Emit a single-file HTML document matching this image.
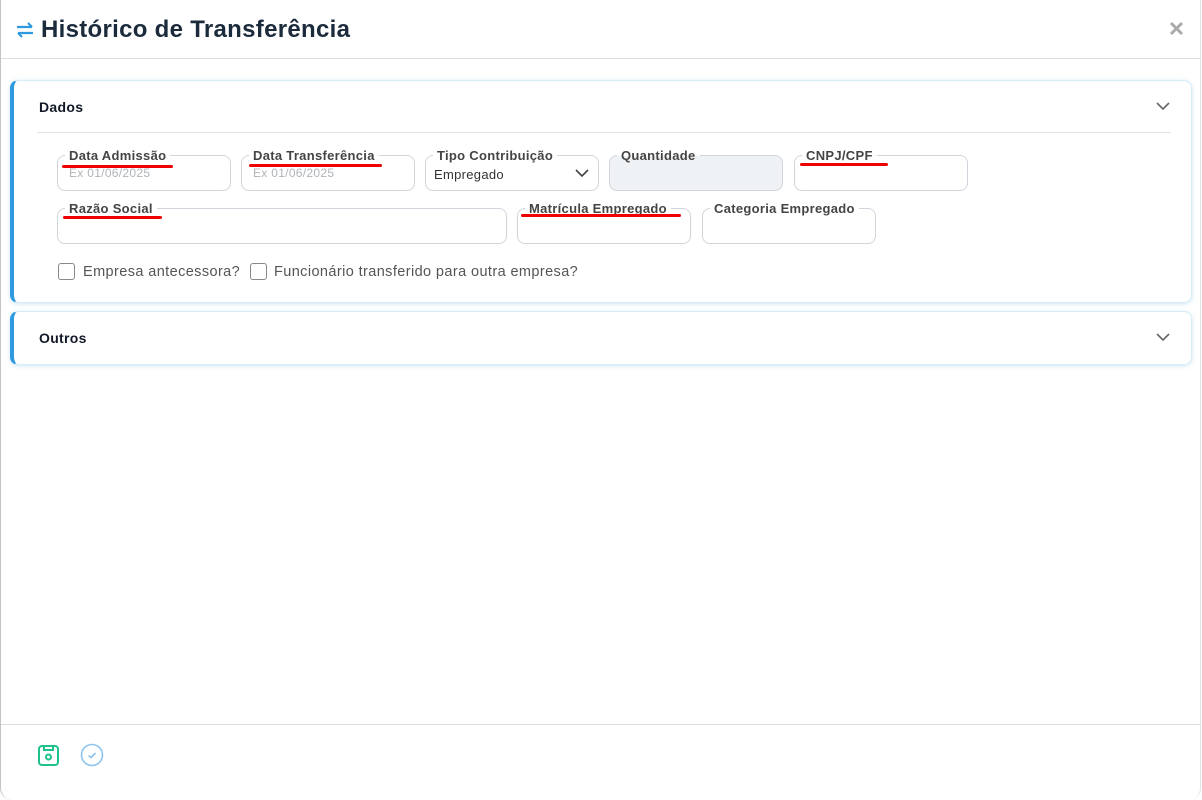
<!DOCTYPE html>
<html><head><meta charset="utf-8"><style>
*{box-sizing:border-box;margin:0;padding:0}
body{width:1202px;height:800px;background:#fff;font-family:"Liberation Sans",sans-serif;position:relative;overflow:hidden}
.a{position:absolute}
.modal{left:0;top:0;width:1201px;height:800px;border-left:1px solid #c4c4c4;border-right:1px solid #e4e4e4;border-radius:0 0 12px 12px}
.title{left:41px;top:16px;font-size:24px;font-weight:bold;color:#1c2b3c;letter-spacing:0.3px}
.card{left:10px;width:1182px;border:1px solid #d6ecf8;border-left:4px solid #2f9ae0;border-radius:8px;box-shadow:0 1px 4px rgba(120,180,220,.35)}
.ch{font-size:14px;font-weight:bold;color:#111827;letter-spacing:0.3px}
.f{border:1px solid #d1d5db;border-radius:8px;height:36px}
.lb{font-size:13px;font-weight:bold;color:#444;background:#fff;padding:0 4px;line-height:14px;top:-7px;left:7px;position:absolute;white-space:nowrap;letter-spacing:0.3px}
.ph{position:absolute;left:11px;top:10px;font-size:12px;color:#b0b4b8;letter-spacing:0.3px}
.red{position:absolute;height:3px;background:#e00;border-radius:2px}
.cb{width:17px;height:17px;border:1px solid #888;border-radius:3px}
.t{font-size:14.5px;color:#555;letter-spacing:0.4px}
</style></head><body>
<div class="a modal"></div>
<svg class="a" style="left:15px;top:22px" width="20" height="16" viewBox="0 0 20 16"><path d="M2 5h15M13 1l4 4M18 11H3M7 15l-4-4" stroke="#2f9ae0" stroke-width="2.2" fill="none"/></svg>
<div class="a title">Histórico de Transferência</div>
<svg class="a" style="left:1169px;top:21px" width="15" height="15" viewBox="0 0 15 15"><path d="M2 2l11 11M13 2L2 13" stroke="#aaa" stroke-width="3"/></svg>
<div class="a" style="left:1px;top:58px;width:1199px;height:1px;background:#ddd"></div>

<div class="a card" style="top:80px;height:223px"></div>
<div class="a ch" style="left:39px;top:99px">Dados</div>
<svg class="a" style="left:1156px;top:102px" width="14" height="9"><path d="M1 1l6 6 6-6" stroke="#666" stroke-width="1.6" fill="none"/></svg>
<div class="a" style="left:37px;top:132px;width:1134px;height:1px;background:#e2e2e2"></div>

<div class="a f" style="left:57px;top:155px;width:174px"><span class="lb">Data Admissão</span><span class="ph">Ex 01/06/2025</span></div>
<div class="red" style="left:62px;top:165px;width:111px"></div>
<div class="a f" style="left:241px;top:155px;width:174px"><span class="lb">Data Transferência</span><span class="ph">Ex 01/06/2025</span></div>
<div class="red" style="left:249px;top:164px;width:133px"></div>
<div class="a f" style="left:425px;top:155px;width:174px"><span class="lb">Tipo Contribuição</span><span class="ph" style="color:#333;font-size:13px;left:8px;top:11px">Empregado</span>
<svg style="position:absolute;left:149px;top:13px" width="14" height="9"><path d="M1 1l6 6 6-6" stroke="#444" stroke-width="1.6" fill="none"/></svg></div>
<div class="a f" style="left:609px;top:155px;width:174px;background:#eff2f5"><span class="lb" style="background:linear-gradient(#fff 50%,#eff2f5 50%)">Quantidade</span></div>
<div class="a f" style="left:794px;top:155px;width:174px"><span class="lb">CNPJ/CPF</span></div>
<div class="red" style="left:800px;top:163px;width:88px"></div>

<div class="a f" style="left:57px;top:208px;width:450px"><span class="lb">Razão Social</span></div>
<div class="red" style="left:63px;top:216px;width:99px"></div>
<div class="a f" style="left:517px;top:208px;width:174px"><span class="lb">Matrícula Empregado</span></div>
<div class="red" style="left:521px;top:214px;width:160px"></div>
<div class="a f" style="left:702px;top:208px;width:174px"><span class="lb">Categoria Empregado</span></div>

<div class="a cb" style="left:58px;top:263px"></div>
<div class="a t" style="left:83px;top:264px">Empresa antecessora?</div>
<div class="a cb" style="left:250px;top:263px"></div>
<div class="a t" style="left:274px;top:264px">Funcionário transferido para outra empresa?</div>

<div class="a card" style="top:311px;height:54px"></div>
<div class="a ch" style="left:39px;top:330px">Outros</div>
<svg class="a" style="left:1156px;top:333px" width="14" height="9"><path d="M1 1l6 6 6-6" stroke="#666" stroke-width="1.6" fill="none"/></svg>

<div class="a" style="left:1px;top:724px;width:1199px;height:1px;background:#ddd"></div>
<svg class="a" style="left:37px;top:744px" width="23" height="23" viewBox="0 0 23 23"><rect x="2" y="2" width="19" height="19" rx="3" stroke="#1fc38a" stroke-width="2" fill="none"/><path d="M7 2v4h9V2" stroke="#1fc38a" stroke-width="2" fill="none"/><circle cx="11.5" cy="13" r="2.5" stroke="#1fc38a" stroke-width="2" fill="none"/></svg>
<svg class="a" style="left:80px;top:743px" width="24" height="24" viewBox="0 0 24 24"><circle cx="12" cy="12" r="10.5" stroke="#8cc4ef" stroke-width="1.6" fill="none"/><path d="M8.5 12.5l2.5 2 4.5-4.5" stroke="#8cc4ef" stroke-width="1.6" fill="none"/></svg>
</body></html>
